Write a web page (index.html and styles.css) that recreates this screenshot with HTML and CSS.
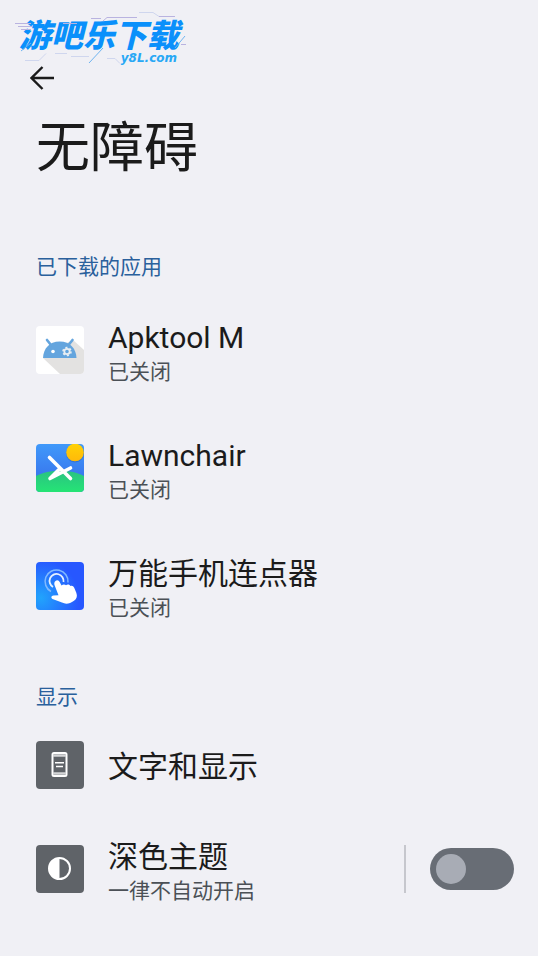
FILE: index.html
```html
<!DOCTYPE html>
<html lang="zh-CN">
<head>
<meta charset="utf-8">
<meta name="viewport" content="width=device-width, initial-scale=1">
<title>无障碍</title>
<link rel="stylesheet" href="styles.css">
</head>
<body>
<div class="watermark">
  <svg class="watermark-lines" viewBox="0 0 180 60" aria-hidden="true">
    <g fill="none" stroke="#b9b3e0" stroke-width="1">
      <path d="M2 13.500h16M5 16.500h14M8 19.500h10M78 8.500h10M90 11l4-3.500h30M146 6.500h16M50 13.500h14M168 34.500h5"/>
      <path stroke="#cfd6ee" d="M126 2.500h14l6 4M12 50.500h14l7-7M42 43.500h12M58 46.500h18M94 48.500h8l5 5"/>
      <path stroke="#6fb4f0" d="M76 53l14-15M162 38l10-12M8 41l10-8"/>
    </g>
  </svg>
  <span class="watermark-name">游吧乐下载</span>
  <span class="watermark-site">y8L.com</span>
</div>
<header class="header">
  <button class="back" type="button" aria-label="返回">
    <svg viewBox="0 0 24 24" aria-hidden="true"><path d="M12.500 1 1.500 12l11 11M2 12h22" fill="none" stroke="#1b1b1b" stroke-width="2.400"/></svg>
  </button>
  <h1 class="title">无障碍</h1>
</header>
<main>
  <section class="group">
    <h2 class="group-title">已下载的应用</h2>
    <ul class="list list-apps">
      <li><a class="row" href="#apktool">
        <svg class="icon" viewBox="0 0 48 48" aria-hidden="true">
          <rect width="48" height="48" rx="4" fill="#fff"/>
          <path d="M7 32 24 48h20a4 4 0 0 0 4-4V24L37 14 24 20z" fill="#e3e2e1"/>
          <path d="M7 32c.3-9 6-16.500 16.700-16.500S40.200 23 40.500 32z" fill="#64a5de"/>
          <path d="m11 14 4 5M36.500 14l-4 5" stroke="#64a5de" stroke-width="2.600" stroke-linecap="round"/>
          <circle cx="17" cy="25.500" r="1.800" fill="#fff"/>
          <circle cx="31" cy="25.500" r="2.700" fill="none" stroke="#e9eef2" stroke-width="1.800"/>
          <circle cx="31" cy="25.500" r="4" fill="none" stroke="#e9eef2" stroke-width="1.600" stroke-dasharray="2.100 2.090"/>
        </svg>
        <span class="text"><span class="name">Apktool M</span><span class="summary">已关闭</span></span>
      </a></li>
      <li><a class="row" href="#lawnchair">
        <svg class="icon" viewBox="0 0 48 48" aria-hidden="true">
          <defs>
            <linearGradient id="sky" x2="0" y2="1"><stop stop-color="#4099fa"/><stop offset="1" stop-color="#3568e8"/></linearGradient>
            <linearGradient id="grass" x2="0" y2="1"><stop stop-color="#2bc282"/><stop offset="1" stop-color="#25e475"/></linearGradient>
            <linearGradient id="sun" x2="0" y2="1"><stop stop-color="#ffd205"/><stop offset="1" stop-color="#ffb90a"/></linearGradient>
            <clipPath id="tile"><rect width="48" height="48" rx="4"/></clipPath>
          </defs>
          <g clip-path="url(#tile)">
            <path fill="url(#sky)" d="M0 0h48v48H0z"/>
            <path fill="url(#grass)" d="M0 32c13-7 35-7 48 0v16H0z"/>
            <circle cx="39" cy="9.500" r="9" fill="#255dbb" opacity=".45"/>
            <circle cx="39" cy="8.500" r="8.800" fill="url(#sun)"/>
          </g>
          <path d="m13.500 13.500 21 21M34.500 24 14 34.500 23.500 25" fill="none" stroke="#fff" stroke-width="3.600" stroke-linecap="round" stroke-linejoin="round"/>
        </svg>
        <span class="text"><span class="name">Lawnchair</span><span class="summary">已关闭</span></span>
      </a></li>
      <li><a class="row" href="#clicker">
        <svg class="icon" viewBox="0 0 48 48" aria-hidden="true">
          <defs><radialGradient id="blue" cx="0.100" cy="0.750" r="0.800"><stop stop-color="#21a4fc"/><stop offset="1" stop-color="#2757ff"/></radialGradient></defs>
          <rect width="48" height="48" rx="4" fill="url(#blue)"/>
          <path d="M15 29.500a11.500 11.500 0 1 1 17-9" fill="none" stroke="#81baff" stroke-width="1.500"/>
          <path d="M17 25a7 7 0 1 1 10.500-5" fill="none" stroke="#e5f2ff" stroke-width="1.800"/>
          <path d="M19.500 19c1.600-1.500 3.500-.5 4.300 1.200l1.700 3.300c1.500-1.500 3.500-1.300 4.500-.2 1.500-1.200 3.300-.9 4.300.6 1.700-.7 3.200.1 3.900 1.800l2.100 5c1.300 3.500.5 6-2.300 8-4.500 3.400-8.500 3.600-12 1.900L16.500 37c-1.700-1-1.500-3.300 1-3.500l5-.2-4-10.300c-.5-1.500-.2-3 1-4z" fill="#fff"/>
        </svg>
        <span class="text"><span class="name">万能手机连点器</span><span class="summary">已关闭</span></span>
      </a></li>
    </ul>
  </section>
  <section class="group">
    <h2 class="group-title">显示</h2>
    <ul class="list">
      <li><a class="row" href="#display">
        <svg class="icon" viewBox="0 0 48 48" aria-hidden="true">
          <rect width="48" height="48" rx="4" fill="#5f6368"/>
          <rect x="16.500" y="12" width="14" height="23" rx="1.500" fill="none" stroke="#fff" stroke-width="2"/>
          <path d="M17 14.500h13M17 32.500h13" stroke="#d5d6d7" stroke-width="2.400"/>
          <path d="M19 21.800h9M20 25.500h7" stroke="#fff" stroke-width="1.600"/>
        </svg>
        <span class="text"><span class="name">文字和显示</span></span>
      </a></li>
      <li class="row">
        <svg class="icon" viewBox="0 0 48 48" aria-hidden="true">
          <rect width="48" height="48" rx="4" fill="#5f6368"/>
          <circle cx="23.500" cy="23.500" r="10.500" fill="none" stroke="#fff" stroke-width="2"/>
          <path d="M23.500 13a10.500 10.500 0 0 0 0 21z" fill="#fff"/>
        </svg>
        <label class="text" for="dark"><span class="name">深色主题</span><span class="summary">一律不自动开启</span></label>
        <span class="divider"></span>
        <input class="switch" id="dark" type="checkbox" role="switch">
      </li>
    </ul>
  </section>
</main>
</body>
</html>
```
FILE: styles.css
```css
* {
  box-sizing: border-box;
}

body {
  margin: 0;
  background: #f0f0f5;
  color: #1b1b1b;
  font-family: Roboto, "Noto Sans CJK SC", sans-serif;
}

.watermark {
  position: absolute;
  top: 10px;
  left: 13px;
  width: 180px;
  padding-top: 10px;
  color: #0a90fb;
  font-style: italic;
  pointer-events: none;
}

.watermark-lines {
  position: absolute;
  top: 0;
  left: 0;
  width: 100%;
}

.watermark-name {
  display: block;
  padding-left: 6px;
  font-size: 32px;
  line-height: 32px;
  font-weight: 900;
}

.watermark-site {
  display: block;
  padding-right: 16px;
  color: #28a8f5;
  font-family: "DejaVu Sans", sans-serif;
  font-size: 12px;
  line-height: 12px;
  font-weight: 700;
  text-align: right;
}

.header {
  padding: 64px 24px 0;
}

.back {
  display: block;
  width: 28px;
  height: 28px;
  margin-left: 4px;
  padding: 2px;
  border: 0;
  background: none;
}

.back svg {
  display: block;
  width: 24px;
  height: 24px;
}

.title {
  margin: 17px 12px 0;
  font-size: 54px;
  line-height: 80px;
  font-weight: 400;
}

.group-title {
  margin: 0;
  padding: 62px 36px 8px;
  color: #2a609c;
  font-size: 21px;
  line-height: 32px;
  font-weight: 400;
}

.group + .group .group-title {
  padding: 36px 36px 0;
}

.list {
  margin: 0;
  padding: 0;
  list-style: none;
}

.row {
  display: flex;
  align-items: center;
  min-height: 104px;
  padding: 0 24px 0 36px;
  color: inherit;
  text-decoration: none;
}

.list-apps .row {
  min-height: 118px;
}

.icon {
  flex: none;
  width: 48px;
  height: 48px;
  margin-right: 24px;
}

.text {
  flex: 1;
  padding-top: 4px;
}

.name,
.summary {
  display: block;
}

.name {
  font-size: 30px;
  line-height: 40px;
}

.summary {
  color: #4b5056;
  font-size: 21px;
  line-height: 28px;
}

.divider {
  width: 2px;
  height: 48px;
  margin-right: 24px;
  background: #c6c7cd;
}

.switch {
  appearance: none;
  flex: none;
  width: 84px;
  height: 42px;
  margin: 0;
  padding: 6px;
  border-radius: 21px;
  background: #686d75;
}

.switch::before {
  content: "";
  display: block;
  width: 30px;
  height: 30px;
  border-radius: 50%;
  background: #a8acb5;
}

.switch:checked::before {
  margin-left: auto;
}
```
